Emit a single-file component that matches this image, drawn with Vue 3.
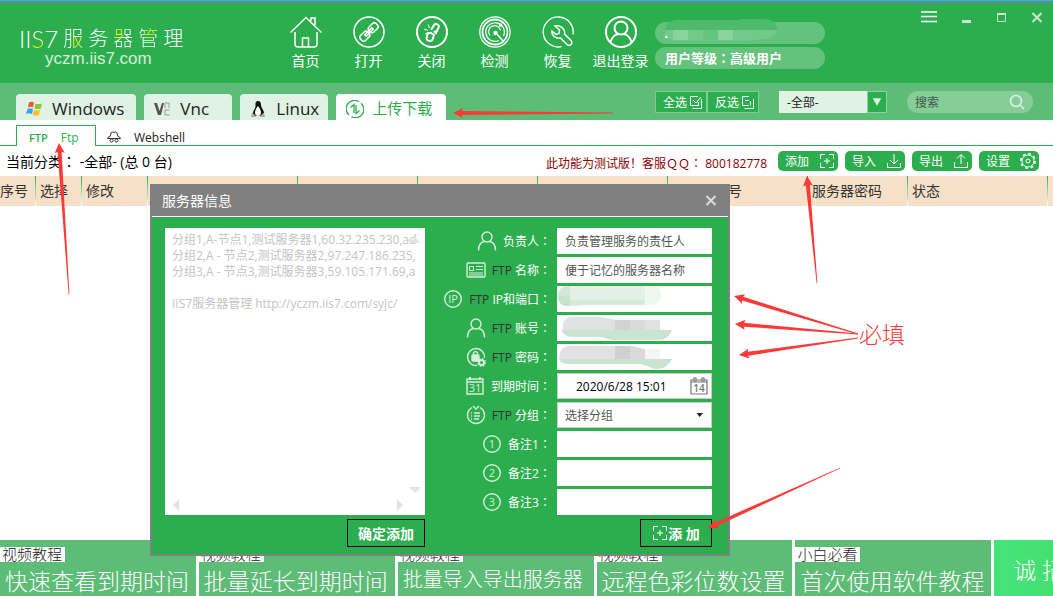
<template>
  <div class="app">
    <header class="header">
      <div class="logo">
        <div class="logo-name">
          <span class="logo-mark">II<b>S</b>7</span>
          <span v-for="(c, i) in logoChars" :key="i" :class="['logo-char', 'char-' + i]">{{ c }}</span>
        </div>
        <div class="logo-site">yczm.iis7.com</div>
      </div>

      <nav class="nav">
        <button v-for="item in navs" :key="item.name" type="button" class="nav-item">
          <svg viewBox="0 0 32 32" v-html="item.icon"></svg>
          <span>{{ item.name }}</span>
        </button>
      </nav>

      <div class="user">
        <div class="pill">
          <svg class="pill-mask" viewBox="0 0 112 22">
            <path d="M0 13Q0 2 10 1H76V0H98Q111 0 112 10V11H0z" fill="#4fb96c" />
            <path d="M0 11H112Q110 20 98 20L80 22H8Q2 20 0 17z" fill="#72c98a" />
            <path d="M8 11H23V21H8zM53 11H68V21H53z" fill="#8ad39e" />
            <path d="M38 11H53V21H38z" fill="#66c480" />
            <path d="M1 16L3 19H0z" fill="#fff" />
          </svg>
        </div>
        <div class="pill">用户等级<span class="colon">：</span>高级用户</div>
      </div>

      <div class="window-tools">
        <button type="button" aria-label="菜单">
          <svg width="16" height="12" viewBox="0 0 16 12"><path d="M0 1h16M0 5.500h16M0 10.500h16" stroke="#fff" stroke-width="1.4" /></svg>
        </button>
        <button type="button" aria-label="最小化">
          <svg width="10" height="12" viewBox="0 0 10 12"><path d="M0 10.500h9" stroke="#c5e8ce" stroke-width="3" /></svg>
        </button>
        <button type="button" aria-label="最大化">
          <svg width="10" height="12" viewBox="0 0 10 12"><path d="M.5 3h8v7.500h-8z" fill="none" stroke="#c5e8ce" /><path d="M0 3h9" stroke="#c5e8ce" stroke-width="2" /></svg>
        </button>
        <button type="button" aria-label="关闭窗口">
          <svg width="10" height="12" viewBox="0 0 10 12"><path d="M.5 2l9 9M9.500 2l-9 9" stroke="#c5e8ce" stroke-width="2" /></svg>
        </button>
      </div>
    </header>

    <!-- 服务器类型 -->
    <div class="type-bar">
      <div class="tabs">
        <button v-for="tab in tabs" :key="tab.name" type="button" :class="['tab', { active: tab.name === currentTab }]" @click="currentTab = tab.name">
          <svg viewBox="0 0 18 18" v-html="tab.icon"></svg>
          {{ tab.name }}
        </button>
      </div>
      <div class="filters">
        <div class="select-btns">
          <button type="button">全选
            <svg viewBox="0 0 14 14"><path d="M9 1.500H1.500v9h8V7M4 5l3 3 5-6M3.500 13.500h9V4" /></svg>
          </button>
          <button type="button">反选
            <svg viewBox="0 0 14 14"><path d="M8 1.500H1.500v9h6M4 5.500h4M3.500 13.500h9V4M9.500 6v4.500" /></svg>
          </button>
        </div>
        <div class="group-select">
          <select v-model="group" aria-label="分组">
            <option>-全部-</option>
          </select>
          <svg viewBox="0 0 19 20"><path d="M5 6h9l-4.500 8z" fill="#dff2e4" /></svg>
        </div>
        <div class="search">
          <input v-model="keyword" type="text" placeholder="搜索" aria-label="搜索" />
          <svg viewBox="0 0 16 16"><circle cx="7" cy="7" r="5.500" /><path d="M11 11l4 4" /></svg>
        </div>
      </div>
    </div>

    <div class="sub-tabs">
      <button type="button" class="sub-tab active"><b>FTP</b>Ftp</button>
      <button type="button" class="sub-tab">
        <svg viewBox="0 0 14 12"><path d="M3 5.500L4 2q.5-1.500 1.500-1L7 1.500 8.500 1q1-.5 1.500 1l1 3.500M3 5.500Q.5 6 .5 7.500H13.500Q13.500 6 11 5.500" /><circle cx="4.500" cy="9.500" r="1.600" /><circle cx="9.500" cy="9.500" r="1.600" /></svg>
        Webshell
      </button>
    </div>

    <div class="status">
      <div class="category">当前分类<span class="colon">：</span> -全部- (总 0 台)</div>
      <div class="notice">此功能为测试版！客服ＱＱ<span class="colon">：</span> 800182778</div>
      <button v-for="act in actions" :key="act.name" type="button" class="action">
        {{ act.name }}
        <svg viewBox="0 0 16 16" v-html="act.icon"></svg>
      </button>
    </div>

    <main class="list">
      <table>
        <thead>
          <tr>
            <th v-for="(col, i) in columns" :key="i" :class="'w' + col.w">{{ col.name }}</th>
          </tr>
        </thead>
      </table>
    </main>

    <footer class="banners">
      <a v-for="b in banners" :key="b.title" href="#" :class="['banner', b.kind]">
        <span v-if="b.tag" class="banner-tag">{{ b.tag }}</span>
        <span class="banner-title">{{ b.title }}</span>
      </a>
    </footer>

    <!-- 服务器信息弹窗 -->
    <section class="dialog">
      <div class="dialog-head">
        <h3>服务器信息</h3>
        <button type="button" aria-label="关闭">
          <svg viewBox="0 0 12 12"><path d="M1.500 2l9 9M10.500 2l-9 9" /></svg>
        </button>
      </div>
      <form class="dialog-body" @submit.prevent>
        <div class="batch">
          <div class="batch-box">
            <textarea v-model="batch" wrap="off" aria-label="批量添加"></textarea>
            <svg class="bar-up" viewBox="0 0 12 6"><path d="M0 6l6-6 6 6z" /></svg>
            <svg class="bar-down" viewBox="0 0 12 6"><path d="M0 0h12L6 6z" /></svg>
            <svg class="bar-left" viewBox="0 0 6 12"><path d="M6 0v12L0 6z" /></svg>
            <svg class="bar-right" viewBox="0 0 6 12"><path d="M0 0v12l6-6z" /></svg>
          </div>
          <button type="button" class="outline-btn">确定添加</button>
        </div>

        <div class="fields">
          <div v-for="f in fields" :key="f.id" class="field">
            <label :for="f.id">
              <svg viewBox="0 0 20 20" v-html="f.icon"></svg>
              <span><i v-if="f.ftp">FTP </i>{{ f.label }}<span class="colon">：</span></span>
            </label>
            <div class="control">
              <select v-if="f.kind === 'select'" :id="f.id">
                <option>选择分组</option>
              </select>
              <input v-else :id="f.id" type="text" :class="f.kind" v-model="f.value" :placeholder="f.hint" />
              <svg v-if="f.kind === 'select'" class="caret" viewBox="0 0 8 5"><path d="M.5 0h6.500L3.700 4z" fill="#222" /></svg>
              <svg v-if="f.kind === 'date'" class="calendar" viewBox="0 0 18 18">
                <path d="M1 3h16v14H1zM1 5h16" />
                <path d="M4 1h2v3H4zM12 1h2v3h-2z" />
                <text x="9" y="15">14</text>
              </svg>
              <svg v-if="f.mask" class="mask" viewBox="0 0 116 26" v-html="f.mask"></svg>
            </div>
          </div>
          <button type="submit" class="outline-btn add-btn">
            <svg viewBox="0 0 16 16" v-html="addIcon"></svg>添 加
          </button>
        </div>
      </form>
    </section>

    <!-- 标注 -->
    <svg class="marks">
      <polygon v-for="(a, i) in arrows" :key="i" :points="arrowPoints(a)" />
      <text x="859" y="343">必填</text>
    </svg>
  </div>
</template>

<script setup>
import { ref } from 'vue';

const logoChars = ['服', '务', '器', '管', '理'];

const navs = [
  { name: '首页', icon: '<path d="M.5 16.500L16 1.500 31.500 16.500M5 16v12q0 3 3 3h16q3 0 3-3V16M12.500 31v-9h6v9M21 5V2h4v7"/>' },
  { name: '打开', icon: '<circle cx="16" cy="16" r="15"/><g transform="rotate(-45 16 16)"><rect x="5" y="12.500" width="10" height="7" rx="2.500"/><rect x="17" y="12.500" width="10" height="7" rx="2.500"/><path d="M11 15h10v2H11z"/></g>' },
  { name: '关闭', icon: '<circle cx="16" cy="16" r="15" stroke-width="2"/><g stroke-width="2"><path d="M15 14l3-5q1-1.500 2.500-1l1.500 1q1.500 1 .5 2.500L20 17l-2-2M12 17l-1.500 5q0 2 1.500 2.500l2 .5q2 0 2.500-1.500L18 19l-3-2z"/></g><path d="M8 13l4 1.500M12 8.500l1.500 3.500M9 18l2-1" stroke-width="1"/>' },
  { name: '检测', icon: '<g stroke-width="1.200"><circle cx="16" cy="16" r="15.200"/><circle cx="16" cy="16" r="12.500" stroke-width="1.800"/><path d="M20 24.500a9.300 9.300 0 1 1 4.500-4.500M11 19.500a6 6 0 1 1 10.500-5"/></g><circle cx="16.500" cy="17" r="1.500" fill="#fff"/><circle cx="21.500" cy="9" r="1" fill="#fff"/><path d="M17 17l7 8"/>' },
  { name: '恢复', icon: '<path d="M19.500 30.600A15 15 0 1 1 31 18.500" stroke-width="1.300"/><path d="M13 10q6-1 9 4 1 2 .5 4l7 7q1 2-.5 3.500t-3.500.5l-7-7q-4 1-7-2-2-2-1.500-5l4 3.500 3-1 .5-3.500z"/>' },
  { name: '退出登录', icon: '<circle cx="16" cy="16" r="15" stroke-width="2"/><circle cx="16" cy="12" r="6.500" stroke-width="2"/><path d="M5 27q3-9 9-9M27 27q-3-9-9-9" stroke-width="2"/>' },
];

const tabs = [
  { name: 'Windows', icon: '<path d="M3 2.500q2.500-1.500 5 0L7 7.500q-2.500-1.500-5 0z" fill="#f1592a"/><path d="M9.500 3.500q3 1 6.500 0l-1.200 5q-3 1-6.300 0z" fill="#8cc63f"/><path d="M1.500 9q2.500-1.500 5.500 0L6 14q-3-1.500-6 0z" fill="#35a3e8"/><path d="M8 10q3 1 6.300 0l-1.300 5q-3 1-6.300 0z" fill="#fbc11d"/>' },
  { name: 'Vnc', icon: '<path d="M0 3h3l2.500 8L8 3h2L7 15H4z" fill="#555"/><path d="M11 8V3h4v5M15.500 10H11v5h4.500" fill="none" stroke="#999"/>' },
  { name: 'Linux', icon: '<path d="M8 1q3 0 3 4 0 2 2 5t0 6H4q-2-3 0-6t1.500-5Q5 1 8 1z" fill="#111"/><path d="M8 6q2 2 3 6 0 4-3 4t-3-4q1-4 3-6z" fill="#fff"/><path d="M2 12.500l4 3.500-1 1H1zM14 12.500l-4 3.500 1 1h4z" fill="#aaa"/>' },
  { name: '上传下载', icon: '<g fill="none" stroke="#2cae4e" stroke-width="1.300"><path d="M3 15A8.300 8.300 0 0 1 13 1.800M15 3.200A8.300 8.300 0 0 1 5.500 16.700"/><path d="M4.500 7.500L8 4.500V13M13.500 10.500L10 13.500V5"/></g>' },
];
const currentTab = ref('上传下载');
const group = ref('-全部-');
const keyword = ref('');

const addIcon = '<path d="M6 1.500H1.500V6M1.500 10v4.500H6M10 14.500h4.500V10M14.500 6V1.500H10M5 8h6M8 5v6"/>';

const actions = [
  { name: '添加', icon: addIcon },
  { name: '导入', icon: '<path d="M1.500 10v4.500h13V10M8 1v9M4 7l4 4 4-4"/>' },
  { name: '导出', icon: '<path d="M1.500 9v5.500h13V9M8 11V2M4 5.500l4-4 4 4"/>' },
  { name: '设置', icon: '<circle cx="8" cy="8" r="6"/><circle cx="8" cy="8" r="7.200" stroke-width="1.600" stroke-dasharray="2.800 2.850"/><circle cx="8" cy="8" r="2"/>' },
];

const columns = [
  { name: '序号', w: 36 },
  { name: '选择', w: 46 },
  { name: '修改', w: 66 },
  { name: '', w: 150 },
  { name: '', w: 120 },
  { name: '', w: 120 },
  { name: '', w: 130 },
  { name: '服务器账号', w: 140 },
  { name: '服务器密码', w: 100 },
  { name: '状态', w: 140 },
  { name: '', w: 'rest' },
];

const banners = [
  { tag: '视频教程', title: '快速查看到期时间' },
  { tag: '视频教程', title: '批量延长到期时间' },
  { tag: '视频教程', title: '批量导入导出服务器', kind: 'small' },
  { tag: '视频教程', title: '远程色彩位数设置' },
  { tag: '小白必看', title: '首次使用软件教程' },
  { title: '诚 招', kind: 'bright' },
];

const batch = ref([
  '分组1,A-节点1,测试服务器1,60.32.235.230,ad',
  '分组2,A - 节点2,测试服务器2,97.247.186.235,',
  '分组3,A - 节点3,测试服务器3,59.105.171.69,a',
  '',
  'IIS7服务器管理 http://yczm.iis7.com/syjc/',
].join('\n'));

const person = '<circle cx="10" cy="6" r="5"/><path d="M1.500 19.500q0-8 6-9M18.500 19.500q0-8-6-9"/>';
const circled = (text) => `<circle cx="10" cy="10" r="8.300"/><text x="10" y="14">${text}</text>`;

// 打码块
const maskA = '<path d="M8 0H95Q104 1 104 8 104 18 94 19H24V20H8Q1 18 1 9 1 2 8 0z" fill="#e4efe6"/><path d="M1 10H13V20H8Q1 18 1 10z" fill="#c6e3cd"/><path d="M8 0H13V10H1Q1 3 8 0z" fill="#d3e8d8"/><path d="M13 14H88V19H13z" fill="#d5ebda"/><path d="M88 0h7q9 1 9 8 0 10-10 11h-6z" fill="#eff7f1"/>';
const maskB = '<path d="M13 2H43L62 5H103V15H5Q6 3 13 2z" fill="#e0e2e2"/><path d="M5 15H115Q112 25 100 25H55L44 22H14Q6 21 5 15z" fill="#c9e5d1"/><path d="M58 5H73V15H58z" fill="#d2d2d2"/><path d="M73 5h15v10H73z" fill="#dadada"/>';
const maskC = '<path d="M10 2H76L86 5H103V15H2Q2 4 10 2z" fill="#e1e2e4"/><path d="M2 15H115Q111 25 98 25L84 20H12Q3 20 2 15z" fill="#c9e5d1"/><path d="M58 2h15v13H58z" fill="#d0d0d0"/><path d="M73 2h3l10 3h2v10H73z" fill="#dadada"/><path d="M88 5h15v10H88z" fill="#f4f6f5"/>';

const fields = ref([
  { id: 'owner', label: '负责人', hint: '负责管理服务的责任人', value: '', icon: person },
  { id: 'name', label: '名称', ftp: true, hint: '便于记忆的服务器名称', value: '', icon: '<rect x="1" y="3" width="18" height="14" rx="1"/><path d="M3.500 6.500h4v4h-4zM10 6.500h7M10 9.500h7M3 13h14M3 15h14" stroke-width="1"/>' },
  { id: 'ip', label: 'IP和端口', ftp: true, value: '', mask: maskA, icon: circled('IP') },
  { id: 'account', label: '账号', ftp: true, value: '', mask: maskB, icon: person },
  { id: 'password', label: '密码', ftp: true, value: '', mask: maskC, icon: '<path d="M11 18.500A8.500 8.500 0 1 1 18.500 11"/><rect x="6" y="8" width="7" height="6" rx="1" fill="#d5efdb"/><path d="M7.500 8V6q2-3 4 0v2"/><circle cx="15.500" cy="15.500" r="2.500" stroke-width="2"/><circle cx="15.500" cy="15.500" r="3.800" stroke-dasharray="1.500 1.500"/>' },
  { id: 'expire', label: '到期时间', kind: 'date', value: '2020/6/28 15:01', icon: '<path d="M2 3h16v15H2zM2 6h16" /><path d="M5 1v3M15 1v3" stroke-width="2"/><text x="10" y="16">31</text>' },
  { id: 'group', label: '分组', ftp: true, kind: 'select', icon: '<path d="M6 2.500a8.500 8.500 0 1 0 8 0M7 1l3 3 3-3"/><path d="M8 8h6M8 11h6M8 14h5M5 8h1M5 11h1M5 14h1"/>' },
  { id: 'note1', label: '备注1', value: '', icon: circled('1') },
  { id: 'note2', label: '备注2', value: '', icon: circled('2') },
  { id: 'note3', label: '备注3', value: '', icon: circled('3') },
]);

// [箭头x, 箭头y, 尾部x, 尾部y]
const arrows = [
  [453, 113, 613, 113],
  [59, 143, 69, 294],
  [807, 176, 817, 283],
  [734, 296, 858, 334],
  [735, 324, 858, 334],
  [739, 355, 858, 338],
  [708, 528, 840, 468],
];

const arrowPoints = ([x1, y1, x2, y2]) => {
  const len = Math.hypot(x2 - x1, y2 - y1);
  const ux = (x2 - x1) / len;
  const uy = (y2 - y1) / len;
  const at = (along, side) => `${x1 + ux * along - uy * side},${y1 + uy * along + ux * side}`;
  return [at(0, 0), at(10, 5), at(9, 2), at(len, 0.4), at(len, -0.4), at(9, -2), at(10, -5)].join(' ');
};
</script>

<style>
body {
  background: #fff;
}
</style>

<style scoped>
.app {
  position: relative;
  display: flex;
  flex-direction: column;
  min-height: 100vh;
  overflow: hidden;
  font-family: "Open Sans", "Noto Sans CJK SC", sans-serif;
  font-size: 12px;
  color: #222;
}

* {
  box-sizing: border-box;
}

button,
input,
select,
textarea {
  margin: 0;
  padding: 0;
  border: none;
  border-radius: 0;
  background: none;
  font: inherit;
  color: inherit;
  outline: none;
}

button {
  cursor: pointer;
}

svg {
  display: block;
  flex: none;
}

.colon {
  font-family: "Noto Sans CJK TC", sans-serif;
}

/* 顶部 */
.header {
  position: relative;
  display: flex;
  align-items: flex-start;
  height: 83px;
  border-top: 3px solid #808080;
  background: #2cae4e;
  color: #fff;
}

.header::before {
  content: "";
  position: absolute;
  left: 0;
  right: 0;
  top: -3px;
  height: 1px;
  background: #00c8fa;
}

.logo {
  width: 274px;
  padding: 24px 0 0 19px;
}

.logo-name {
  display: flex;
  align-items: center;
  gap: 5px;
  height: 24px;
  font-size: 20px;
  font-weight: 300;
  line-height: 24px;
}

.logo-mark {
  font-family: Lato, sans-serif;
  font-size: 24px;
}

.logo-mark b {
  font-weight: 300;
}

.logo-mark b,
.char-0,
.char-2,
.char-3 {
  color: transparent;
  background: linear-gradient(#fff 40%, #e4f01c 70%);
  background-clip: text;
}

.char-0 {
  background-image: radial-gradient(circle at 75% 65%, #e9f23a 20%, #fff 40%);
}

.char-2 {
  background-image: radial-gradient(circle at 25% 25%, #e9f23a 20%, #fff 30%);
}

.char-3 {
  background-image: radial-gradient(circle at 60% 22%, #e9f23a 20%, #fff 30%);
}

.logo-site {
  padding-left: 26px;
  font-family: "Liberation Sans", sans-serif;
  font-size: 17px;
  line-height: 16px;
  color: #d5efdb;
}

.nav {
  display: flex;
}

.nav-item {
  display: flex;
  flex-direction: column;
  align-items: center;
  gap: 4px;
  width: 63px;
  padding-top: 13px;
  font-size: 14px;
  line-height: 18px;
  white-space: nowrap;
}

.nav-item svg {
  width: 32px;
  height: 32px;
  fill: none;
  stroke: #fff;
  stroke-width: 1.5;
}

.user {
  display: flex;
  flex-direction: column;
  gap: 3px;
  padding: 19px 0 0 3px;
}

.pill {
  width: 170px;
  height: 22px;
  padding-left: 10px;
  border-radius: 11px;
  background: #63c27c;
  font-weight: bold;
  font-size: 13px;
  line-height: 22px;
}

.pill-mask {
  width: 112px;
  height: 22px;
  margin-top: -3px;
}

.user .pill:first-child {
  display: flex;
}

.window-tools {
  display: flex;
  gap: 25px;
  margin-left: auto;
  padding: 8px 11px 0 0;
}

/* 类型栏 */
.type-bar {
  display: flex;
  justify-content: space-between;
  align-items: flex-end;
  height: 37px;
  padding: 0 20px 0 16px;
  background: #5dbd77;
}

.tabs {
  display: flex;
  gap: 8px;
}

.tab {
  display: flex;
  align-items: center;
  gap: 8px;
  height: 26px;
  padding: 3px 12px 0 10px;
  border-radius: 4px 4px 0 0;
  background: #dff2e4;
  font-size: 17px;
  line-height: 23px;
}

.tab svg {
  width: 18px;
  height: 18px;
}

.tab:nth-child(2),
.tab:nth-child(3) {
  width: 88px;
}

.tab.active {
  width: 110px;
  background: #fff;
  font-size: 15px;
  color: #2cae4e;
}

.filters {
  display: flex;
  gap: 20px;
  padding-bottom: 7px;
}

.select-btns {
  display: flex;
}

.select-btns button {
  display: flex;
  align-items: center;
  gap: 2px;
  width: 52px;
  height: 22px;
  padding: 0 0 0 7px;
  border: 1px solid #7fcb93;
  background: #2cae4e;
  color: #fff;
}

.select-btns svg {
  width: 14px;
  height: 14px;
  fill: none;
  stroke: #fff;
}

.group-select {
  position: relative;
  width: 108px;
  height: 22px;
  background: #dff2e4;
}

.group-select select {
  width: 100%;
  height: 22px;
  padding-left: 8px;
  appearance: none;
}

.group-select svg {
  position: absolute;
  right: 0;
  top: 0;
  width: 20px;
  height: 22px;
  border: 1px solid #8fd2a1;
  background: #2cae4e;
  pointer-events: none;
}

.search {
  display: flex;
  align-items: center;
  width: 126px;
  height: 22px;
  padding: 0 8px;
  border-radius: 11px;
  background: #86cd99;
}

.search input {
  flex: 1;
  width: 0;
}

.search input::placeholder {
  color: #3c5a44;
}

.search svg {
  width: 16px;
  height: 16px;
  fill: none;
  stroke: #dff2e4;
  stroke-width: 1.5;
}

/* 二级标签 */
.sub-tabs {
  display: flex;
  align-items: flex-end;
  height: 26px;
  padding-left: 16px;
  box-shadow: inset 0 -1px #2cae4e;
}

.sub-tab {
  display: flex;
  align-items: center;
  gap: 13px;
  height: 21px;
  padding: 3px 11px 0;
}

.sub-tab.active {
  width: 80px;
  padding: 3px 12px 0;
  border: 1px solid #2cae4e;
  border-bottom: none;
  background: #fff;
  color: #2cae4e;
}

.sub-tab b {
  font-size: 11px;
  font-weight: 600;
}

.sub-tab svg {
  width: 14px;
  height: 12px;
  fill: none;
  stroke: #333;
}

/* 状态行 */
.status {
  display: flex;
  align-items: center;
  gap: 7px;
  height: 30px;
  padding: 0 14px 0 6px;
}

.category {
  flex: 1;
  font-size: 14px;
  color: #000;
}

.notice {
  margin-right: 4px;
  padding-top: 4px;
  color: #8b0000;
}

.action {
  display: flex;
  align-items: center;
  justify-content: space-between;
  width: 60px;
  height: 20px;
  padding: 0 3px 0 7px;
  border-radius: 5px;
  background: #2cae4e;
  color: #fff;
}

.action svg,
.add-btn svg {
  width: 16px;
  height: 16px;
  fill: none;
  stroke: #fff;
}

/* 列表 */
.list {
  flex: 1;
}

table {
  width: 100%;
  table-layout: fixed;
  border-collapse: collapse;
  background: #f7e0c8;
}

th {
  height: 30px;
  padding: 0 0 0 4px;
  background: linear-gradient(#2cae4e, #fff) right / 1px 100% no-repeat;
  font-size: 14px;
  font-weight: normal;
  line-height: 20px;
  text-align: left;
  white-space: nowrap;
  color: #333;
}

th:first-child {
  padding-left: 0;
}

th:last-child {
  background: none;
}

.w36 { width: 36px; }
.w46 { width: 46px; }
.w66 { width: 66px; }
.w100 { width: 100px; }
.w120 { width: 120px; }
.w130 { width: 130px; }
.w140 { width: 140px; }
.w150 { width: 150px; }

/* 底部广告 */
.banners {
  display: grid;
  grid-template-columns: repeat(5, 10fr) 3fr;
  gap: 3px;
  height: 56px;
}

.banner {
  display: flex;
  flex-direction: column;
  align-items: flex-start;
  min-width: 0;
  padding-top: 7px;
  overflow: hidden;
  background: #5dbd77;
  color: #fff;
  font-weight: 300;
  text-decoration: none;
  white-space: nowrap;
}

.banner-tag {
  padding: 0 3px 0 2px;
  background: #fff;
  font-size: 15px;
  line-height: 15px;
  color: #222;
}

.banner-title {
  padding-left: 5px;
  font-size: 23px;
  line-height: 38px;
}

.banner.small .banner-title {
  font-size: 20px;
  line-height: 36px;
}

.banner.bright {
  padding: 11px 0 0 14px;
  background: linear-gradient(90deg, #45e47c, #45df70);
}

.banner.bright .banner-title {
  font-size: 23px;
}

/* 弹窗 */
.dialog {
  position: absolute;
  left: 150px;
  top: 184px;
  width: 580px;
  border: 2px solid #808080;
  border-top: none;
  background: #2cae4e;
  color: #fff;
}

.dialog-head {
  display: flex;
  justify-content: space-between;
  align-items: center;
  height: 33px;
  padding: 0 11px 0 10px;
  border-bottom: 1px solid #fff;
  background: #808080;
}

.dialog-head h3 {
  margin: 0;
  font-size: 14px;
  font-weight: normal;
}

.dialog-head svg {
  width: 12px;
  height: 12px;
  stroke: #ddd;
  stroke-width: 2;
}

.dialog-body {
  display: flex;
  justify-content: space-between;
  padding: 11px 16px 7px 13px;
}

.batch {
  display: flex;
  flex-direction: column;
  align-items: flex-end;
  gap: 4px;
}

.batch-box {
  position: relative;
  width: 260px;
  height: 287px;
  padding: 4px 7px;
  background: #fff;
}

.batch-box textarea {
  display: block;
  width: 100%;
  height: 100%;
  line-height: 16px;
  color: #c4c4c4;
  resize: none;
  overflow: hidden;
}

.batch-box svg {
  position: absolute;
  fill: #e3e3e3;
}

.bar-up {
  right: 4px;
  top: 9px;
  width: 12px;
  height: 6px;
}

.bar-down {
  right: 4px;
  bottom: 22px;
  width: 12px;
  height: 6px;
}

.bar-left {
  left: 8px;
  bottom: 4px;
  width: 6px;
  height: 12px;
}

.bar-right {
  right: 22px;
  bottom: 4px;
  width: 6px;
  height: 12px;
}

.outline-btn {
  display: flex;
  align-items: center;
  justify-content: center;
  width: 78px;
  height: 28px;
  border: 1px solid #000;
  font-size: 14px;
  font-weight: bold;
}

.fields {
  display: flex;
  flex-direction: column;
  align-items: flex-end;
  gap: 3px;
}

.field {
  display: flex;
  align-items: center;
  gap: 6px;
}

.field label {
  display: flex;
  align-items: center;
  gap: 6px;
}

.field label i {
  font-style: normal;
  color: #333;
}

.field label svg {
  width: 20px;
  height: 20px;
  fill: none;
  stroke: #d5efdb;
  stroke-width: 1.4;
}

.field label svg :deep(text) {
  font-size: 11px;
  text-anchor: middle;
  fill: #d5efdb;
  stroke: none;
}

.control {
  position: relative;
  width: 155px;
  height: 26px;
  background: #fff;
  color: #555;
}

.control input,
.control select {
  display: block;
  width: 100%;
  height: 26px;
  padding: 0 8px;
  appearance: none;
}

.control input::placeholder {
  color: #555;
  opacity: 1;
}

.control .date,
.control select {
  border: 1px solid #ccc;
}

.control .date {
  padding-left: 18px;
  color: #000;
}

.control select {
  padding: 0 7px;
}

.control .caret {
  position: absolute;
  right: 8px;
  top: 11px;
  width: 8px;
  height: 5px;
}

.calendar {
  position: absolute;
  right: 4px;
  top: 4px;
  width: 18px;
  height: 18px;
  fill: #fff;
  stroke: #777;
  stroke-width: 1.2;
}

.calendar text {
  font-size: 10px;
  font-weight: 600;
  text-anchor: middle;
  fill: #777;
  stroke: none;
}

.control .mask {
  position: absolute;
  left: 0;
  top: 0;
  width: 116px;
  height: 26px;
  pointer-events: none;
}

.add-btn {
  width: 72px;
  margin-top: 1px;
}

/* 红色标注 */
.marks {
  position: absolute;
  left: 0;
  top: 0;
  width: 100%;
  height: 100%;
  fill: #fb3a37;
  pointer-events: none;
}

.marks text {
  font-size: 23px;
  font-weight: 300;
}
</style>
